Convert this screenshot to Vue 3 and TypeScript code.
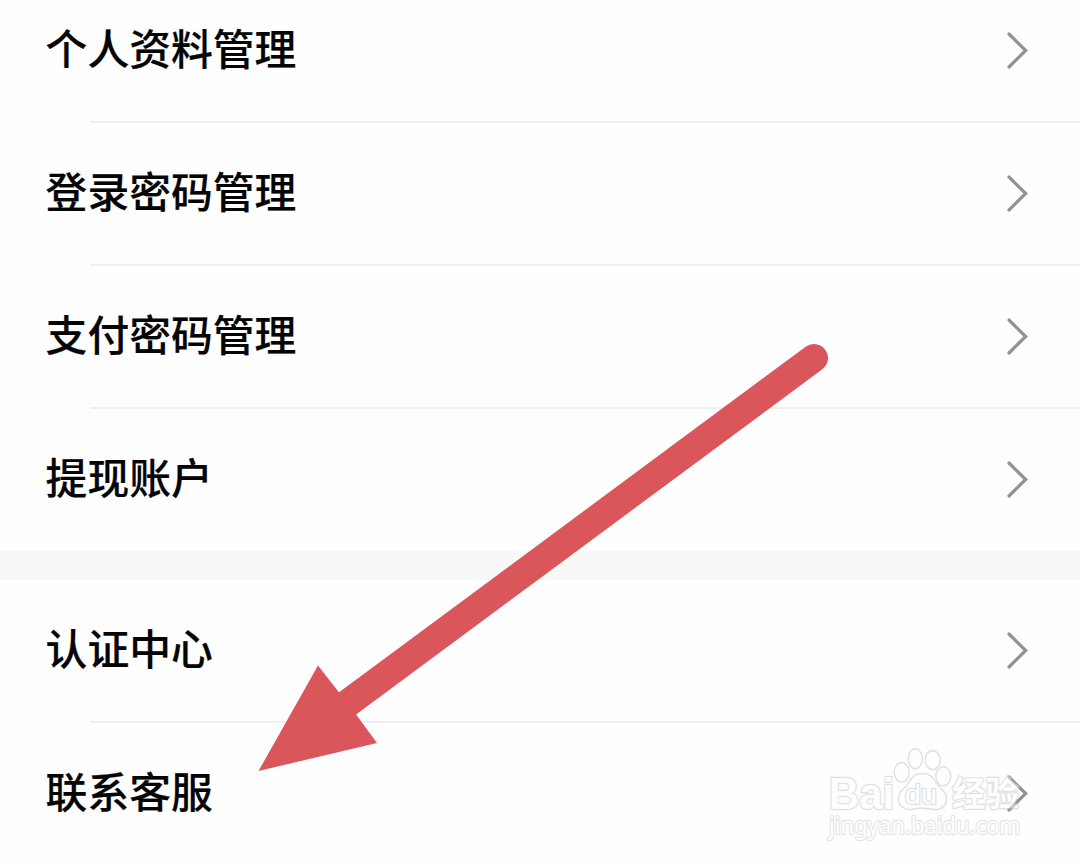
<script setup lang="ts">
interface Item {
  id: string
  label: string
}

const groups: Item[][] = [
  [
    { id: 'profile', label: '个人资料管理' },
    { id: 'login', label: '登录密码管理' },
    { id: 'payment', label: '支付密码管理' },
    { id: 'withdraw', label: '提现账户' },
  ],
  [
    { id: 'verify', label: '认证中心' },
    { id: 'service', label: '联系客服' },
  ],
]
</script>

<template>
  <main class="screen">
    <div class="list">
      <ul v-for="(group, i) in groups" :key="i" class="group">
        <li v-for="item in group" :key="item.id" class="row">
          <span class="label">{{ item.label }}</span>
          <svg class="chevron" viewBox="0 0 26 42" aria-hidden="true">
            <path d="M4 4 20.700 20.500 4 37" />
          </svg>
        </li>
      </ul>
    </div>

    <svg class="overlay" viewBox="0 0 1080 864">
      <g class="arrow">
        <path class="shaft" d="M814 358 340 709" />
        <path class="head" d="M258.500 771 318 665.500 339.500 693 356.500 715 377 743Z" />
      </g>
      <g class="mark">
        <text class="brand" x="829" y="808.500" textLength="65" lengthAdjust="spacingAndGlyphs">Bai</text>
        <ellipse cx="901.700" cy="772.300" rx="7.500" ry="9.800" />
        <ellipse cx="915.300" cy="758.700" rx="7" ry="10" />
        <ellipse cx="932.700" cy="760" rx="7.500" ry="9.500" />
        <ellipse cx="943.300" cy="776.300" rx="7.500" ry="9.500" />
        <path d="M922 773.500C913 773.500 911 780 907 785C902 790 898 793 898.500 799C899 806 904 810 910 809.500C915 809 918 808 922 808C927 808 931 810 937 809.500C943 809 947 804 946.500 798C946 792 941 789 937 784C933 778 931 773.500 922 773.500Z" />
        <text class="du" x="905" y="803.500" textLength="32" lengthAdjust="spacingAndGlyphs">du</text>
        <text class="cn" x="952" y="805.500" textLength="67" lengthAdjust="spacingAndGlyphs">经验</text>
        <text class="url" x="829" y="834" textLength="191" lengthAdjust="spacingAndGlyphs">jingyan.baidu.com</text>
      </g>
    </svg>
  </main>
</template>

<style scoped>
.screen {
  position: relative;
  width: 1080px;
  height: 864px;
  overflow: hidden;
  background: #fefefe;
  font-family: "Liberation Sans", "Noto Sans CJK SC", sans-serif;
}

.list {
  display: flex;
  flex-direction: column;
  gap: 29px;
  margin-top: -20px;
  background: #f8f8f8;
}

.group {
  margin: 0;
  padding: 0;
  list-style: none;
  background: #fefefe;
}

.row {
  display: grid;
  grid-template-columns: 1fr 26px;
  grid-template-rows: 141px 2px;
  align-items: center;
  padding: 0 49px 0 45px;
}

.row:last-child {
  grid-template-rows: 142px;
}

.row:not(:last-child)::after {
  content: "";
  grid-column: 1 / -1;
  height: 2px;
  margin: 0 -49px 0 45px;
  background: #efefef;
}

.label {
  padding: 0 0 8px 0.6px;
  color: #050505;
  font-family: "Noto Sans CJK SC", sans-serif;
  font-size: 41.8px;
  font-weight: 500;
  line-height: 60px;
  white-space: nowrap;
  -webkit-text-stroke: 0.2px #050505;
}

.chevron {
  width: 26px;
  height: 42px;
  fill: none;
  stroke: #929292;
  stroke-width: 3.2;
  stroke-linecap: round;
  stroke-linejoin: miter;
}

.overlay {
  position: absolute;
  inset: 0;
  width: 1080px;
  height: 864px;
}

.shaft {
  fill: none;
  stroke: #da565b;
  stroke-width: 28;
  stroke-linecap: round;
}

.head {
  fill: #da565b;
}

.mark {
  fill: #ffffff;
  stroke: #c4c4c4;
  stroke-width: 1.4;
  stroke-linejoin: round;
  opacity: 0.5;
}

.mark text {
  paint-order: stroke;
  stroke-width: 2.4;
}

.mark .brand {
  font: bold 44px "Liberation Sans", sans-serif;
}

.mark .du {
  font: 27px "Liberation Sans", sans-serif;
}

.mark .cn {
  font: bold 34px "Noto Sans CJK SC", sans-serif;
}

.mark .url {
  font: 23px "Noto Sans", sans-serif;
  stroke: #d0d0d0;
}
</style>

<style>
body {
  margin: 0;
}
</style>
